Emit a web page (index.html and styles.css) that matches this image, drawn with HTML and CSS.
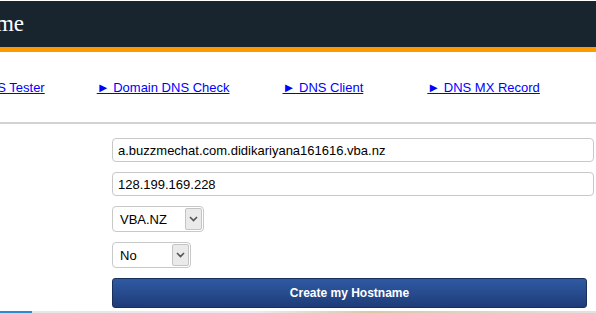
FILE: index.html
```html
<!DOCTYPE html>
<html>

<head>
    <title>Create my Hostname</title>
    <link rel="stylesheet" href="styles.css">
</head>

<body>
    <div class="header">
        <h1 class="site-title"><span class="title-inner">Create Hostname</span></h1>
    </div>

    <div class="nav-links">
        <a href="#" class="nav-first">&#9658; DNS Tester</a>
        <a href="#" class="nav-second">&#9658; Domain DNS Check</a>
        <a href="#" class="nav-third">&#9658; DNS Client</a>
        <a href="#">&#9658; DNS MX Record</a>
    </div>

    <div class="form-area">
        <div class="form-row">
            <input type="text" class="text-field" value="a.buzzmechat.com.didikariyana161616.vba.nz">
        </div>
        <div class="form-row">
            <input type="text" class="text-field" value="128.199.169.228">
        </div>
        <div class="form-row">
            <div class="fake-select select-domain">
                <span class="select-value">VBA.NZ</span>
                <span class="select-arrow">
                    <svg width="9" height="6" viewBox="0 0 9 6"><path d="M1 1 L4.5 4.5 L8 1" fill="none" stroke="#555" stroke-width="1.6"/></svg>
                </span>
            </div>
        </div>
        <div class="form-row">
            <div class="fake-select select-wild">
                <span class="select-value">No</span>
                <span class="select-arrow">
                    <svg width="9" height="6" viewBox="0 0 9 6"><path d="M1 1 L4.5 4.5 L8 1" fill="none" stroke="#555" stroke-width="1.6"/></svg>
                </span>
            </div>
        </div>
        <button class="submit-btn">Create my Hostname</button>
    </div>

    <div class="bottom-strip">
        <div class="strip-blue"></div>
        <div class="strip-grey"></div>
    </div>
</body>

</html>
```

FILE: styles.css
```css
body {
    font-family: 'Liberation Sans', Arial, sans-serif;
    background: #fff;
    color: #000;
    margin: 0;
    padding: 0;
    overflow: hidden;
    height: 313px;
}

.header {
    margin-top: 1px;
    background: #18242e;
    border-bottom: 5px solid #ff9900;
    height: 46px;
    overflow: hidden;
}

.site-title {
    margin: 0;
    font-family: 'Liberation Serif', 'Times New Roman', serif;
    font-weight: normal;
    font-size: 23px;
    color: #fff;
    line-height: 46px;
    white-space: nowrap;
}

.title-inner {
    display: inline-block;
    margin-left: -135px;
}

.nav-links {
    display: flex;
    height: 70px;
    align-items: center;
    border-bottom: 2px solid #d2d2d2;
    font-size: 13px;
    white-space: nowrap;
    overflow: hidden;
}

.nav-links a {
    color: #0000ff;
    text-decoration: underline;
}

.nav-first {
    margin-left: -38px;
    margin-right: 52px;
}

.nav-second {
    margin-right: 53px;
}

.nav-third {
    margin-right: 64px;
}

.form-area {
    padding: 14px 0 0 112px;
}

.form-row {
    margin-bottom: 10px;
}

.text-field {
    box-sizing: border-box;
    width: 482px;
    height: 24px;
    padding: 0 5px;
    border: 1px solid #c8c8c8;
    border-radius: 4px;
    font-family: 'Liberation Sans', Arial, sans-serif;
    font-size: 13px;
    color: #000;
    outline: none;
}

.fake-select {
    box-sizing: border-box;
    display: flex;
    align-items: stretch;
    height: 26px;
    border: 1px solid #c8c8c8;
    border-radius: 4px;
    font-size: 13px;
}

.select-domain {
    width: 92px;
}

.select-wild {
    width: 79px;
}

.select-value {
    flex: 1;
    display: flex;
    align-items: center;
    padding-left: 7px;
}

.select-arrow {
    width: 15px;
    margin: 1px;
    background: #eaeaea;
    border: 1px solid #c4c4c4;
    border-radius: 2px;
    display: flex;
    align-items: center;
    justify-content: center;
}

.submit-btn {
    display: block;
    width: 475px;
    height: 30px;
    margin-top: 0;
    background: linear-gradient(#2f5aa3, #1f3c78);
    border: 1px solid #1a2f5c;
    border-radius: 3px;
    color: #fff;
    font-family: 'Liberation Sans', Arial, sans-serif;
    font-weight: bold;
    font-size: 12px;
    cursor: pointer;
}

.bottom-strip {
    display: flex;
    height: 3px;
    margin-top: 3px;
}

.strip-blue {
    width: 32px;
    background: #2a8ad4;
}

.strip-grey {
    flex: 1;
    background: linear-gradient(90deg, #e6e6e6, #ece9f0 40%, #d8c9a8 60%, #e2e2e2);
}
```
